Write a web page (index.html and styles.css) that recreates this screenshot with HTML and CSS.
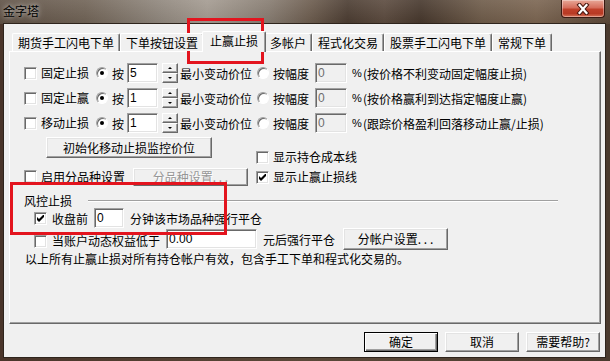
FILE: index.html
```html
<!DOCTYPE html>
<html lang="zh-CN">
<head>
  <meta charset="UTF-8"/>
  <meta name="viewport" content="width=device-width, initial-scale=1.0"/>
  <title>金字塔</title>
  <link rel="stylesheet" href="styles.css">
</head>
<body>
  <div class="window">
    <div class="titlebar">
      <span class="title">金字塔</span>
      <button class="close-btn" aria-label="关闭">
        <svg width="14" height="12" viewBox="0 0 14 12">
          <path d="M3.5 2 L10.5 10 M10.5 2 L3.5 10" stroke="#4a1810" stroke-width="4.2" stroke-linecap="square"/>
          <path d="M3.5 2 L10.5 10 M10.5 2 L3.5 10" stroke="#fff" stroke-width="2.2" stroke-linecap="square"/>
        </svg>
      </button>
    </div>

    <div class="client">
      <div class="tabs">
        <div class="tab">期货手工闪电下单</div>
        <div class="tab">下单按钮设置</div>
        <div class="tab active">止赢止损</div>
        <div class="tab">多帐户</div>
        <div class="tab">程式化交易</div>
        <div class="tab">股票手工闪电下单</div>
        <div class="tab">常规下单</div>
      </div>

      <div class="panel">
        <div class="stop-list">
          <div class="opt-row">
            <span class="cb"></span>
            <span class="cb-label">固定止损</span>
            <span class="rb on"></span>
            <span class="rb-label">按</span>
            <input class="edit tick-edit" type="text" value="5">
            <span class="spin"><span class="spin-btn up"></span><span class="spin-btn down"></span></span>
            <span class="unit">最小变动价位</span>
            <span class="rb rb-pct"></span>
            <span class="rb-label">按幅度</span>
            <input class="edit pct-edit" type="text" value="0" disabled>
            <span class="pct">%</span>
            <span class="hint">(按价格不利变动固定幅度止损)</span>
          </div>
          <div class="opt-row">
            <span class="cb"></span>
            <span class="cb-label">固定止赢</span>
            <span class="rb on"></span>
            <span class="rb-label">按</span>
            <input class="edit tick-edit" type="text" value="1">
            <span class="spin"><span class="spin-btn up"></span><span class="spin-btn down"></span></span>
            <span class="unit">最小变动价位</span>
            <span class="rb rb-pct"></span>
            <span class="rb-label">按幅度</span>
            <input class="edit pct-edit" type="text" value="0" disabled>
            <span class="pct">%</span>
            <span class="hint">(按价格赢利到达指定幅度止赢)</span>
          </div>
          <div class="opt-row">
            <span class="cb"></span>
            <span class="cb-label">移动止损</span>
            <span class="rb on"></span>
            <span class="rb-label">按</span>
            <input class="edit tick-edit" type="text" value="1">
            <span class="spin"><span class="spin-btn up"></span><span class="spin-btn down"></span></span>
            <span class="unit">最小变动价位</span>
            <span class="rb rb-pct"></span>
            <span class="rb-label">按幅度</span>
            <input class="edit pct-edit" type="text" value="0" disabled>
            <span class="pct">%</span>
            <span class="hint">(跟踪价格盈利回落移动止赢/止损)</span>
          </div>
        </div>

        <div class="mid">
          <div class="mid-left">
            <button class="btn init-btn">初始化移动止损监控价位</button>
            <div class="opt-row sub-row">
              <span class="cb"></span>
              <span class="cb-label">启用分品种设置</span>
              <button class="btn variety-btn" disabled>分品种设置. . .</button>
            </div>
          </div>
          <div class="mid-right">
            <div class="check-line">
              <span class="cb"></span>
              <span class="cb-label">显示持仓成本线</span>
            </div>
            <div class="check-line">
              <span class="cb checked"><svg width="7" height="7" viewBox="0 0 7 7"><path d="M0 2 L2 4 L7 -1 L7 2 L2 7 L0 5 Z" fill="#000"/></svg></span>
              <span class="cb-label">显示止赢止损线</span>
            </div>
          </div>
        </div>

        <div class="group-head">
          <span class="group-title">风控止损</span>
          <span class="group-line"></span>
        </div>

        <div class="risk-row close-row">
          <span class="cb checked"><svg width="7" height="7" viewBox="0 0 7 7"><path d="M0 2 L2 4 L7 -1 L7 2 L2 7 L0 5 Z" fill="#000"/></svg></span>
          <span class="risk-label">收盘前</span>
          <input class="edit min-edit" type="text" value="0">
          <span class="risk-text">分钟该市场品种强行平仓</span>
        </div>

        <div class="risk-row equity-row">
          <span class="cb low"></span>
          <span class="risk-label low">当账户动态权益低于</span>
          <input class="edit equity-edit" type="text" value="0.00">
          <span class="risk-text">元后强行平仓</span>
          <button class="btn account-btn">分帐户设置. . .</button>
        </div>

        <p class="note">以上所有止赢止损对所有持仓帐户有效，包含手工下单和程式化交易的。</p>
      </div>

      <div class="dlg-buttons">
        <button class="btn dlg-btn default">确定</button>
        <button class="btn dlg-btn">取消</button>
        <button class="btn dlg-btn">需要帮助?</button>
      </div>
    </div>

    <div class="mark mark-tab"></div>
    <div class="mark mark-risk"></div>
  </div>
</body>
</html>
```

FILE: styles.css
```css
* {
  box-sizing: border-box;
  margin: 0;
  padding: 0;
}

body {
  width: 610px;
  height: 361px;
  overflow: hidden;
  font-family: "Noto Sans CJK SC", "Noto Sans", sans-serif;
  font-size: 12px;
  color: #000;
  background: #4a3a2e;
}

.window {
  position: relative;
  width: 610px;
  height: 361px;
  display: flex;
  flex-direction: column;
  background: linear-gradient(90deg, #4a352a 0%, #5a4838 50%, #4a3a2e 100%);
}

/* title bar */
.titlebar {
  height: 24px;
  display: flex;
  align-items: flex-start;
  padding-left: 3px;
  background:
    linear-gradient(180deg, rgba(255,255,255,0.1), rgba(0,0,0,0.05)),
    linear-gradient(90deg, #5e5044 0%, #6f6255 14%, #8e857b 26%, #a39a90 34%, #867b70 44%, #6a5a4c 51%, #4a3b30 57%, #5a493d 63%, #45362b 69%, #6d5a48 79%, #7a6450 88%, #5a4636 100%);
}

.title {
  line-height: 16px;
  margin-top: 3px;
  color: #000;
  text-shadow: 0 0 4px rgba(255,255,255,0.6), 0 0 8px rgba(255,255,255,0.4);
}

.close-btn {
  margin-left: auto;
  margin-right: 5px;
  width: 44px;
  height: 18px;
  display: flex;
  align-items: center;
  justify-content: center;
  border: 1px solid #3a1a12;
  border-top: none;
  border-radius: 0 0 4px 4px;
  background: linear-gradient(180deg, #e8a898 0%, #d66e5c 45%, #c0402a 55%, #b83a24 80%, #d8755a 100%);
  box-shadow: inset 0 0 0 1px rgba(255,255,255,0.35);
}

/* client area */
.client {
  flex: 1;
  margin: 0 5px 4px 4px;
  padding: 7px 4px 0 5px;
  background: #f0f0f0;
  box-shadow: 0 0 0 1px #2e241c;
}

.tabs {
  display: flex;
  align-items: flex-end;
  height: 20px;
  padding-left: 3px;
  position: relative;
  z-index: 1;
}

.tab {
  height: 18px;
  padding: 0 5px;
  line-height: 17px;
  white-space: nowrap;
  background: #f0f0f0;
  border: 1px solid;
  border-color: #fff #696969 transparent #fff;
  border-bottom: none;
  border-radius: 2px 2px 0 0;
  box-shadow: inset -1px 0 0 #a0a0a0;
}

.tab.active {
  height: 21px;
  margin: 0 -2px -1px;
  padding: 0 7px;
  position: relative;
  z-index: 2;
}

.panel {
  height: 273px;
  background: #f0f0f0;
  border: 1px solid;
  border-color: #fff #696969 #696969 #fff;
  box-shadow: inset -1px -1px 0 #a0a0a0;
  padding: 11px 0 0 14px;
}

/* controls */
.cb {
  flex: none;
  width: 13px;
  height: 13px;
  display: flex;
  align-items: center;
  justify-content: center;
  background: #fff;
  border: 1px solid;
  border-color: #a0a0a0 #fff #fff #a0a0a0;
  box-shadow: inset 1px 1px 0 #696969, inset -1px -1px 0 #e3e3e3;
}

.cb svg {
  display: block;
}

.rb {
  flex: none;
  position: relative;
  width: 12px;
  height: 12px;
  border-radius: 50%;
  background: #fff;
  border: 1px solid;
  border-color: #a0a0a0 #fff #fff #a0a0a0;
  box-shadow: inset 1px 1px 0 #696969;
  margin-left: 7px;
}

.rb.on::after {
  content: "";
  position: absolute;
  left: 3px;
  top: 3px;
  width: 4px;
  height: 4px;
  border-radius: 50%;
  background: #000;
}

.edit {
  flex: none;
  height: 20px;
  padding: 0 2px;
  font-family: "Liberation Sans", sans-serif;
  font-size: 12px;
  color: #000;
  background: #fff;
  border: 1px solid;
  border-color: #a0a0a0 #fff #fff #a0a0a0;
  box-shadow: inset 1px 1px 0 #696969, inset -1px -1px 0 #e3e3e3;
  outline: none;
}

.edit:disabled {
  background: #f0f0f0;
  color: #6d6d6d;
}

.btn {
  padding: 0;
  font-family: inherit;
  font-size: 12px;
  line-height: 14px;
  color: #000;
  background: #f0f0f0;
  border: 1px solid;
  border-color: #fff #696969 #696969 #fff;
  box-shadow: inset -1px -1px 0 #a0a0a0, inset 1px 1px 0 #e3e3e3;
}

.btn:disabled {
  color: #969696;
  text-shadow: 1px 1px 0 #fff;
}

.btn.default {
  border-color: #000;
  box-shadow: inset 1px 1px 0 #fff, inset -1px -1px 0 #696969, inset -2px -2px 0 #a0a0a0;
}

.spin {
  flex: none;
  display: flex;
  flex-direction: column;
  width: 16px;
  height: 20px;
  margin-left: 4px;
}

.spin-btn {
  flex: 1;
  display: flex;
  align-items: center;
  justify-content: center;
  background: #f0f0f0;
  border: 1px solid;
  border-color: #fff #696969 #696969 #fff;
  box-shadow: inset -1px -1px 0 #a0a0a0;
}

.spin-btn::after {
  content: "";
  border-left: 2px solid transparent;
  border-right: 2px solid transparent;
}

.spin-btn.up::after {
  border-bottom: 2px solid #000;
}

.spin-btn.down::after {
  border-top: 2px solid #000;
}

/* stop rows */
.stop-list {
  display: flex;
  flex-direction: column;
  gap: 5px;
}

.opt-row {
  display: flex;
  align-items: center;
  height: 20px;
  white-space: nowrap;
}

.cb-label {
  margin-left: 4px;
  line-height: 16px;
}

.rb-label {
  margin-left: 4px;
}

.tick-edit {
  width: 31px;
  margin-left: 3px;
}

.unit {
  margin-left: 2px;
}

.rb-pct {
  margin-left: 5px;
}

.pct-edit {
  width: 32px;
  margin-left: 6px;
}

.pct {
  width: 11px;
  margin-left: 5px;
  font-family: "Liberation Sans", sans-serif;
  font-size: 11px;
}

/* middle block */
.mid {
  display: flex;
  margin-top: 4px;
}

.mid-left {
  width: 224px;
}

.init-btn {
  display: block;
  width: 166px;
  height: 21px;
  margin-left: 22px;
}

.sub-row {
  margin-top: 9px;
  height: 19px;
}

.variety-btn {
  width: 115px;
  height: 18px;
  margin-left: 8px;
}

.mid-right {
  margin-left: 8px;
  padding-top: 10px;
}

.check-line {
  display: flex;
  align-items: center;
  height: 20px;
  white-space: nowrap;
}

/* risk group */
.group-head {
  display: flex;
  align-items: center;
  height: 14px;
  margin-top: 7px;
}

.group-title {
  line-height: 14px;
}

.group-line {
  flex: 1;
  height: 2px;
  margin: 0 42px 0 16px;
  border-top: 1px solid #a0a0a0;
  border-bottom: 1px solid #fff;
}

.risk-row {
  display: flex;
  align-items: center;
  white-space: nowrap;
  padding-left: 10px;
}

.close-row {
  height: 20px;
}

.equity-row {
  height: 22px;
}

.risk-label {
  margin-left: 5px;
}

.low {
  margin-top: 4px;
}

.risk-label.low {
  margin-top: 3px;
}

.min-edit {
  width: 30px;
  margin-left: 6px;
}

.equity-edit {
  width: 91px;
  margin-left: 6px;
}

.risk-text {
  margin-left: 6px;
}

.account-btn {
  width: 105px;
  height: 22px;
  margin-left: 8px;
}

.note {
  margin-top: 1px;
  margin-left: 1px;
  line-height: 16px;
  white-space: nowrap;
}

/* dialog buttons */
.dlg-buttons {
  display: flex;
  justify-content: flex-end;
  gap: 7px;
  margin-top: 8px;
  margin-right: 1px;
}

.dlg-btn {
  width: 74px;
  height: 20px;
}

/* red annotation boxes */
.mark {
  position: absolute;
  border: 3px solid #e3141e;
  pointer-events: none;
}

.mark-tab {
  left: 187px;
  top: 18px;
  width: 77px;
  height: 46px;
}

.mark-risk {
  left: 10px;
  top: 182px;
  width: 217px;
  height: 53px;
}
```
